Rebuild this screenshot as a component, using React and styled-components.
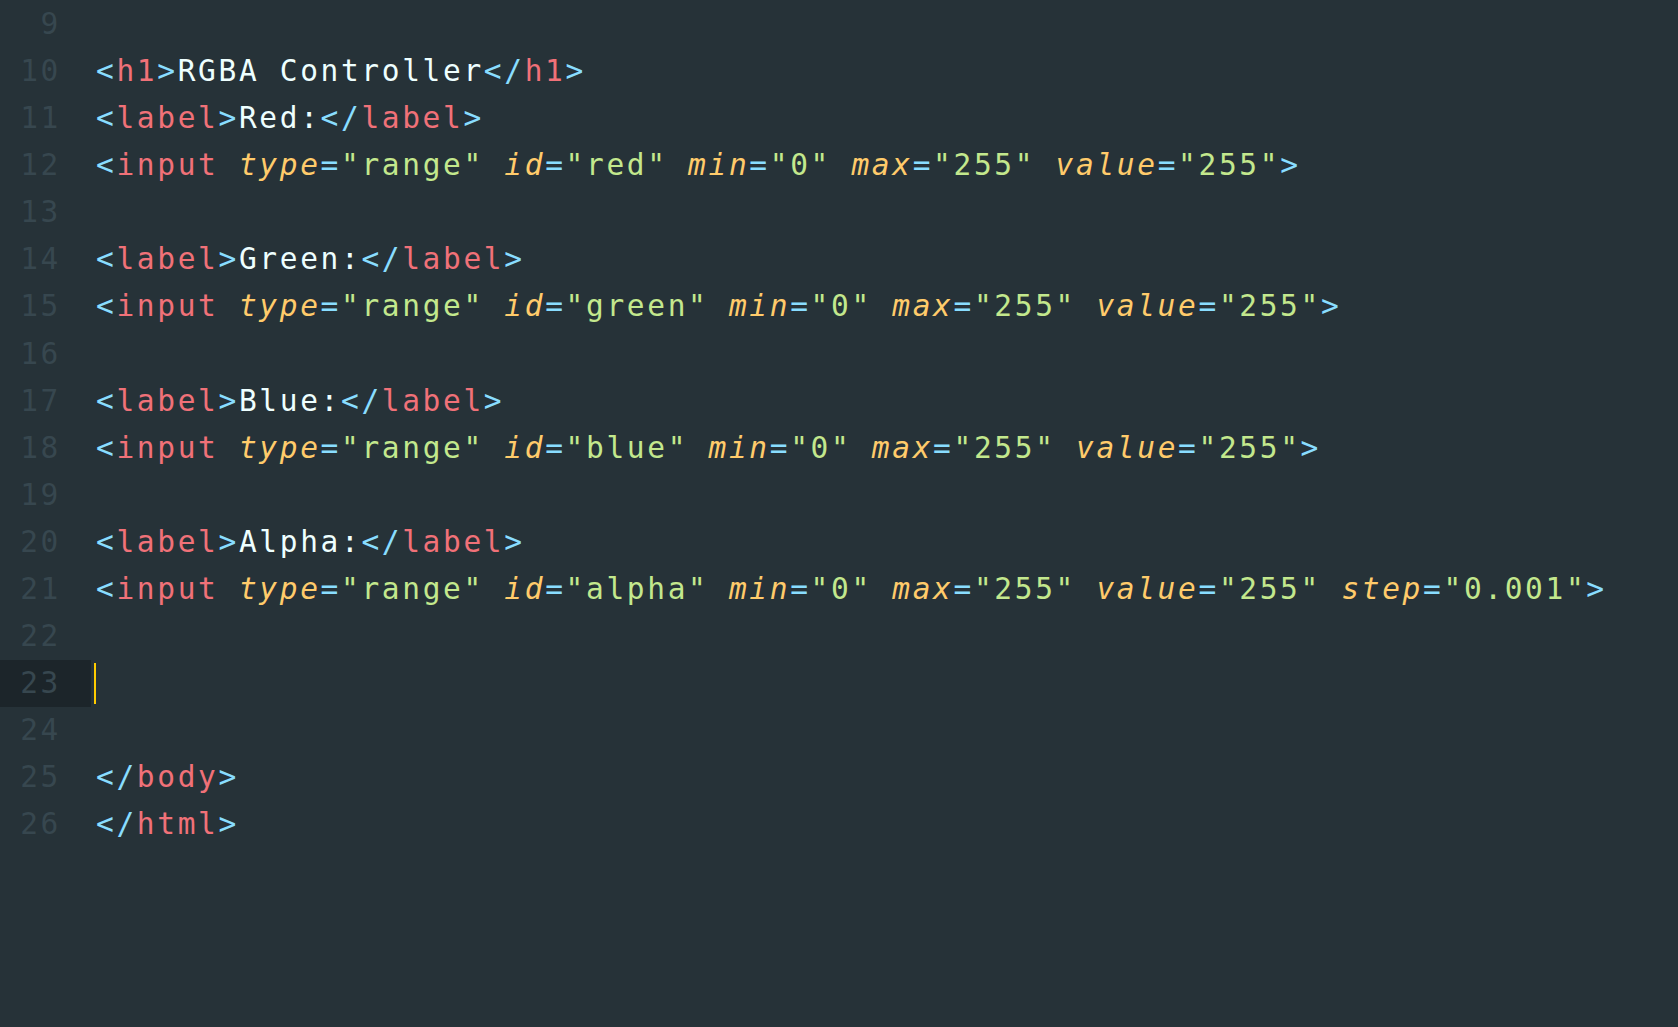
import styled, { createGlobalStyle } from 'styled-components';

const GlobalStyle = createGlobalStyle`
  html, body {
    margin: 0;
    padding: 0;
    background: #263238;
  }
`;

const Editor = styled.main`
  min-height: 100vh;
  box-sizing: border-box;
  background: #263238;
  padding-top: 1px;
  font-family: "DejaVu Sans Mono", "Liberation Mono", monospace;
  font-size: 29.5px;
  letter-spacing: 2.65px;
  line-height: 47.08px;
  color: #eeffff;
  white-space: pre;
`;

const Row = styled.div`
  display: flex;
  height: 47.08px;
`;

const LineNumber = styled.div`
  flex: 0 0 91px;
  box-sizing: border-box;
  padding-right: 30px;
  text-align: right;
  color: #37474f;
  background: ${p => (p.$active ? '#1c252a' : 'transparent')};
`;

const Code = styled.div`
  position: relative;
  padding-left: 5px;
`;

const Cursor = styled.span`
  position: absolute;
  left: 3px;
  top: 3px;
  width: 2px;
  height: 41px;
  background: #ffcc00;
`;

const Punct = styled.span`
  color: #89ddff;
`;
const Tag = styled.span`
  color: #f07178;
`;
const Attr = styled.span`
  color: #ffcb6b;
  font-style: italic;
`;
const Str = styled.span`
  color: #c3e88d;
`;
const Text = styled.span`
  color: #eeffff;
`;

function Open({ name, attrs }) {
  return (
    <>
      <Punct>&lt;</Punct>
      <Tag>{name}</Tag>
      {attrs &&
        attrs.map(([k, v]) => (
          <span key={k}>
            {' '}
            <Attr>{k}</Attr>
            <Punct>=</Punct>
            <Str>"{v}"</Str>
          </span>
        ))}
      <Punct>&gt;</Punct>
    </>
  );
}

function Close({ name }) {
  return (
    <>
      <Punct>&lt;/</Punct>
      <Tag>{name}</Tag>
      <Punct>&gt;</Punct>
    </>
  );
}

const range = (id, extra = []) => [
  ['type', 'range'],
  ['id', id],
  ['min', '0'],
  ['max', '255'],
  ['value', '255'],
  ...extra,
];

const lines = [
  { n: 9 },
  { n: 10, c: <><Open name="h1" /><Text>RGBA Controller</Text><Close name="h1" /></> },
  { n: 11, c: <><Open name="label" /><Text>Red:</Text><Close name="label" /></> },
  { n: 12, c: <Open name="input" attrs={range('red')} /> },
  { n: 13 },
  { n: 14, c: <><Open name="label" /><Text>Green:</Text><Close name="label" /></> },
  { n: 15, c: <Open name="input" attrs={range('green')} /> },
  { n: 16 },
  { n: 17, c: <><Open name="label" /><Text>Blue:</Text><Close name="label" /></> },
  { n: 18, c: <Open name="input" attrs={range('blue')} /> },
  { n: 19 },
  { n: 20, c: <><Open name="label" /><Text>Alpha:</Text><Close name="label" /></> },
  { n: 21, c: <Open name="input" attrs={range('alpha', [['step', '0.001']])} /> },
  { n: 22 },
  { n: 23, active: true },
  { n: 24 },
  { n: 25, c: <Close name="body" /> },
  { n: 26, c: <Close name="html" /> },
];

function App() {
  return (
    <>
      <GlobalStyle />
      <Editor>
        {lines.map(line => (
          <Row key={line.n}>
            <LineNumber $active={line.active}>{line.n}</LineNumber>
            <Code>
              {line.active && <Cursor />}
              {line.c}
            </Code>
          </Row>
        ))}
      </Editor>
    </>
  );
}

export default App;
